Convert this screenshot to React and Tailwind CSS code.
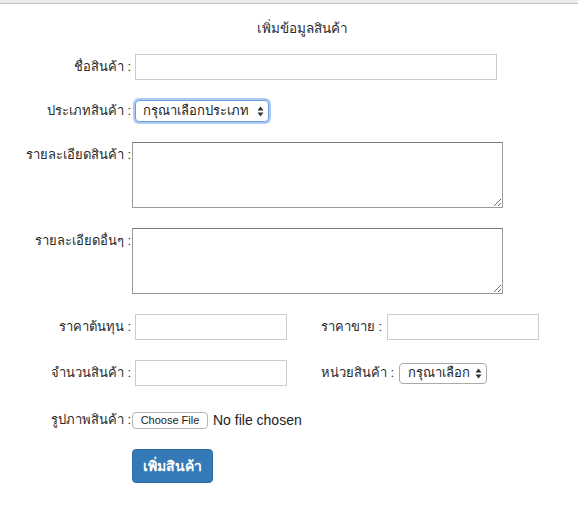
import React from "react";

const Arrows = () => (
  <svg width="7" height="11" viewBox="0 0 7 11" className="shrink-0">
    <path d="M3.5 0.5 L6.5 4.5 L0.5 4.5 Z" fill="#333" />
    <path d="M3.5 10.5 L6.5 6.5 L0.5 6.5 Z" fill="#333" />
  </svg>
);

const Label = ({ children, className = "" }) => (
  <div className={"w-[132px] shrink-0 text-right pr-[1px] " + className}>{children}</div>
);

export default function App() {
  return (
    <div className="w-[578px] h-[509px] bg-white text-[#2b2b2b] text-[13px] font-['Liberation_Sans','Noto_Sans',sans-serif] overflow-hidden">
      <div className="h-[4px] bg-[#ececec] border-b border-[#c6c6c6]" />
      <div className="mt-[15px] h-[20px] leading-[20px] text-center pl-[26px] text-[13.5px]">เพิ่มข้อมูลสินค้า</div>

      <div className="mt-[15px] flex items-center h-[26px]">
        <Label>ชื่อสินค้า :</Label>
        <div className="ml-[3px] w-[362px] h-[26px] border border-[#cccccc] bg-white" />
      </div>

      <div className="mt-[20px] flex items-center h-[22px]">
        <Label>ประเภทสินค้า :</Label>
        <div className="ml-[3px] w-[134px] h-[22px] rounded-[4px] border border-[#6d9fe0] shadow-[0_0_0_2px_rgba(110,160,230,0.55)] bg-white flex items-center justify-between pl-[7px] pr-[4px] text-[13px] text-[#222]">
          <span>กรุณาเลือกประเภท</span>
          <Arrows />
        </div>
      </div>

      <div className="mt-[20px] flex items-start h-[66px]">
        <Label className="pt-[3px]">รายละเอียดสินค้า :</Label>
        <textarea className="w-[371px] h-[66px] border border-[#9a9a9a] border-t-[#7a7a7a] bg-white resize-y outline-none" />
      </div>

      <div className="mt-[20px] flex items-start h-[66px]">
        <Label className="pt-[3px]">รายละเอียดอื่นๆ :</Label>
        <textarea className="w-[371px] h-[66px] border border-[#9a9a9a] border-t-[#7a7a7a] bg-white resize-y outline-none" />
      </div>

      <div className="mt-[20px] flex items-center h-[26px]">
        <Label>ราคาต้นทุน :</Label>
        <div className="ml-[3px] w-[152px] h-[26px] border border-[#cccccc] bg-white" />
        <div className="ml-[34px] whitespace-nowrap">ราคาขาย :</div>
        <div className="ml-[5px] w-[152px] h-[26px] border border-[#cccccc] bg-white" />
      </div>

      <div className="mt-[20px] flex items-center h-[26px]">
        <Label>จำนวนสินค้า :</Label>
        <div className="ml-[3px] w-[152px] h-[26px] border border-[#cccccc] bg-white" />
        <div className="ml-[34px] whitespace-nowrap">หน่วยสินค้า :</div>
        <div className="ml-[5px] w-[88px] h-[21px] rounded-[4px] border border-[#aaaaaa] bg-white flex items-center justify-between pl-[8px] pr-[4px] text-[13px] text-[#222]">
          <span>กรุณาเลือก</span>
          <Arrows />
        </div>
      </div>

      <div className="mt-[20px] flex items-center h-[28px]">
        <Label>รูปภาพสินค้า :</Label>
        <div className="ml-[0px] w-[76px] h-[17px] rounded-[4px] border border-[#b5b5b5] bg-white flex items-center justify-center text-[11px] text-[#222] font-['Liberation_Sans',sans-serif]">
          Choose File
        </div>
        <div className="ml-[5px] text-[14px] text-[#222] font-['Liberation_Sans',sans-serif]">No file chosen</div>
      </div>

      <div className="mt-[15px] flex">
        <div className="ml-[132px] w-[81px] h-[34px] rounded-[4px] bg-[#337ab7] border border-[#2e6da4] text-white font-bold text-[14px] flex items-center justify-center">
          เพิ่มสินค้า
        </div>
      </div>
    </div>
  );
}
